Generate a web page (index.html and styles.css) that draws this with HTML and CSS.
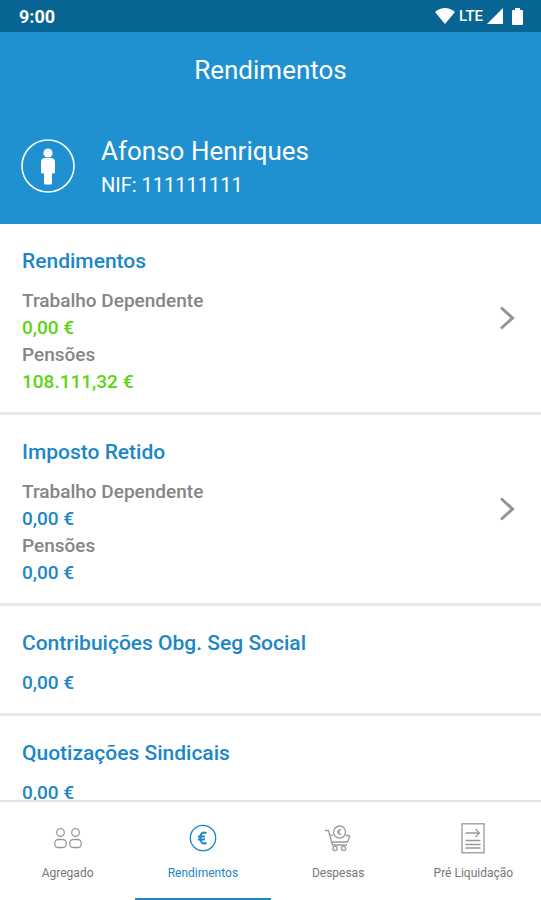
FILE: index.html
```
<!DOCTYPE html>
<html lang="pt">
  <head>
    <meta charset="utf-8">
    <meta name="viewport" content="width=device-width, initial-scale=1">
    <title>Rendimentos</title>
    <link rel="stylesheet" href="styles.css">
  </head>
  <body>
    <div class="status-bar">
      <span class="clock">9:00</span>
      <div class="status-icons">
        <svg width="20" height="16" viewBox="0 0 20 16"><path d="M0 4Q10-4 20 4L10 16Z"/></svg>
        <span class="network">LTE</span>
        <svg width="16" height="16" viewBox="0 0 16 16"><path d="M16 0V16H0Z"/></svg>
        <svg class="battery" width="11" height="17" viewBox="0 0 11 17"><path d="M3 0h5v2h2q1 0 1 1v13q0 1-1 1H1q-1 0-1-1V3q0-1 1-1h2Z"/></svg>
      </div>
    </div>

    <header class="header">
      <h1 class="page-title">Rendimentos</h1>
      <div class="profile">
        <svg class="avatar" width="54" height="54" viewBox="0 0 54 54">
          <circle cx="27" cy="27" r="26" fill="none" stroke="#fff" stroke-width="1.6"/>
          <circle cx="27" cy="14" r="4.6"/>
          <path d="M24 19h6q4 0 4 4v10q0 1.500-1.500 1.500H31V44q0 1.500-1.500 1.500h-5Q23 45.500 23 44v-9.500h-1.500Q20 34.500 20 33V23q0-4 4-4Z"/>
        </svg>
        <div>
          <p class="name">Afonso Henriques</p>
          <p class="nif">NIF: 111111111</p>
        </div>
      </div>
    </header>

    <main class="content">
      <section class="card">
        <div class="card-body">
          <h2 class="card-title">Rendimentos</h2>
          <p class="label">Trabalho Dependente</p>
          <p class="value positive">0,00 €</p>
          <p class="label">Pensões</p>
          <p class="value positive">108.111,32 €</p>
        </div>
        <button class="open-btn" aria-label="Ver rendimentos">
          <svg width="16" height="26" viewBox="0 0 16 26"><path d="M2 2.500 13.500 13 2 23.500"/></svg>
        </button>
      </section>

      <section class="card">
        <div class="card-body">
          <h2 class="card-title">Imposto Retido</h2>
          <p class="label">Trabalho Dependente</p>
          <p class="value">0,00 €</p>
          <p class="label">Pensões</p>
          <p class="value">0,00 €</p>
        </div>
        <button class="open-btn" aria-label="Ver imposto retido">
          <svg width="16" height="26" viewBox="0 0 16 26"><path d="M2 2.500 13.500 13 2 23.500"/></svg>
        </button>
      </section>

      <section class="card">
        <div class="card-body">
          <h2 class="card-title">Contribuições Obg. Seg Social</h2>
          <p class="value">0,00 €</p>
        </div>
      </section>

      <section class="card">
        <div class="card-body">
          <h2 class="card-title">Quotizações Sindicais</h2>
          <p class="value">0,00 €</p>
        </div>
      </section>
    </main>

    <nav class="tab-bar">
      <a class="tab" href="#agregado">
        <svg width="32" height="32" viewBox="0 0 32 32">
          <circle cx="8.500" cy="10.500" r="3.800"/>
          <circle cx="23.500" cy="10.500" r="3.800"/>
          <rect x="2.800" y="17.500" width="11.400" height="8" rx="3.500"/>
          <rect x="17.800" y="17.500" width="11.400" height="8" rx="3.500"/>
        </svg>
        Agregado
      </a>
      <a class="tab active" href="#rendimentos">
        <svg width="32" height="32" viewBox="0 0 32 32">
          <circle cx="16" cy="16" r="12.700"/>
          <path class="euro" d="M19.500 11Q13.500 9 13.300 16q.2 7 6.200 5M11 14.500h7M11 17.500h7"/>
        </svg>
        Rendimentos
      </a>
      <a class="tab" href="#despesas">
        <svg width="32" height="32" viewBox="0 0 32 32">
          <path d="M3 8.500h3.500l4 14.500h14.500M7.500 12.500l3.500 1M28 13.500 25.500 20H10M27.500 13.500h-4"/>
          <circle cx="17.500" cy="10" r="6"/>
          <path d="M19.500 8q-3.500-1-3.500 2t3.500 2M15 10h3"/>
          <circle cx="13" cy="26.500" r="2.100"/>
          <circle cx="21.500" cy="26.500" r="2.100"/>
        </svg>
        Despesas
      </a>
      <a class="tab" href="#pre-liquidacao">
        <svg width="32" height="32" viewBox="0 0 32 32">
          <rect x="5" y="1.800" width="22" height="29"/>
          <path d="M8.500 11H22M18.500 7l4 4-4 4M8.500 18.500h15M8.500 22.500h15M8.500 26h15"/>
        </svg>
        Pré Liquidação
      </a>
    </nav>
  </body>
</html>
```
FILE: styles.css
```
* {
  box-sizing: border-box;
}

body {
  display: flex;
  flex-direction: column;
  height: 100vh;
  margin: 0;
  background: #fff;
  color: #1b86c8;
  font-family: Roboto, "Liberation Sans", sans-serif;
}

h1,
h2,
p {
  margin: 0;
}

.status-bar {
  display: flex;
  flex-shrink: 0;
  align-items: center;
  justify-content: space-between;
  height: 32px;
  padding: 0 18px 0 19px;
  background: #086493;
  color: #fff;
}

.clock {
  font-size: 18px;
  font-weight: 700;
}

.status-icons {
  display: flex;
  align-items: center;
  gap: 4px;
  fill: #fff;
}

.network {
  font-size: 15px;
  font-weight: 500;
}

.battery {
  margin-left: 5px;
}

.header {
  flex-shrink: 0;
  padding: 22px 21px 29px;
  background: #1f90d0;
  color: #fff;
}

.page-title {
  font-size: 26px;
  font-weight: 400;
  line-height: 32px;
  text-align: center;
}

.profile {
  display: flex;
  align-items: center;
  gap: 26px;
  margin-top: 51px;
}

.avatar {
  fill: #fff;
}

.name {
  margin-bottom: 10px;
  font-size: 26px;
  line-height: 28px;
}

.nif {
  font-size: 20px;
  line-height: 20px;
}

.content {
  flex: 1;
  min-height: 0;
  overflow-y: auto;
  scrollbar-width: none;
}

.card {
  display: flex;
  align-items: center;
  justify-content: space-between;
  padding: 0 22px;
  border-bottom: 3px solid #e9e9e9;
}

.card-body {
  padding: 25px 0 17px;
}

.card-title {
  margin-bottom: 14px;
  font-size: 21px;
  font-weight: 500;
  line-height: 24px;
}

.label,
.value {
  font-size: 19px;
  font-weight: 500;
  line-height: 27px;
}

.label {
  color: #858585;
}

.positive {
  color: #5ad510;
}

.open-btn {
  padding: 4px;
  border: none;
  background: none;
  cursor: pointer;
}

.open-btn svg {
  display: block;
  fill: none;
  stroke: #949494;
  stroke-width: 3;
}

.tab-bar {
  display: flex;
  flex-shrink: 0;
  border-top: 2px solid #e4e4e4;
  background: #fff;
}

.tab {
  display: flex;
  flex: 1;
  flex-direction: column;
  align-items: center;
  gap: 11px;
  padding: 20px 0 17px;
  border-bottom: 2px solid transparent;
  color: #777;
  font-size: 12px;
  line-height: 16px;
  text-decoration: none;
}

.tab svg {
  fill: none;
  stroke: #999;
  stroke-width: 1.3;
}

.tab.active {
  border-bottom-color: #1b86c8;
  color: #1b86c8;
}

.tab.active svg {
  stroke: #1b86c8;
}

.tab .euro {
  stroke-width: 2;
}
```
